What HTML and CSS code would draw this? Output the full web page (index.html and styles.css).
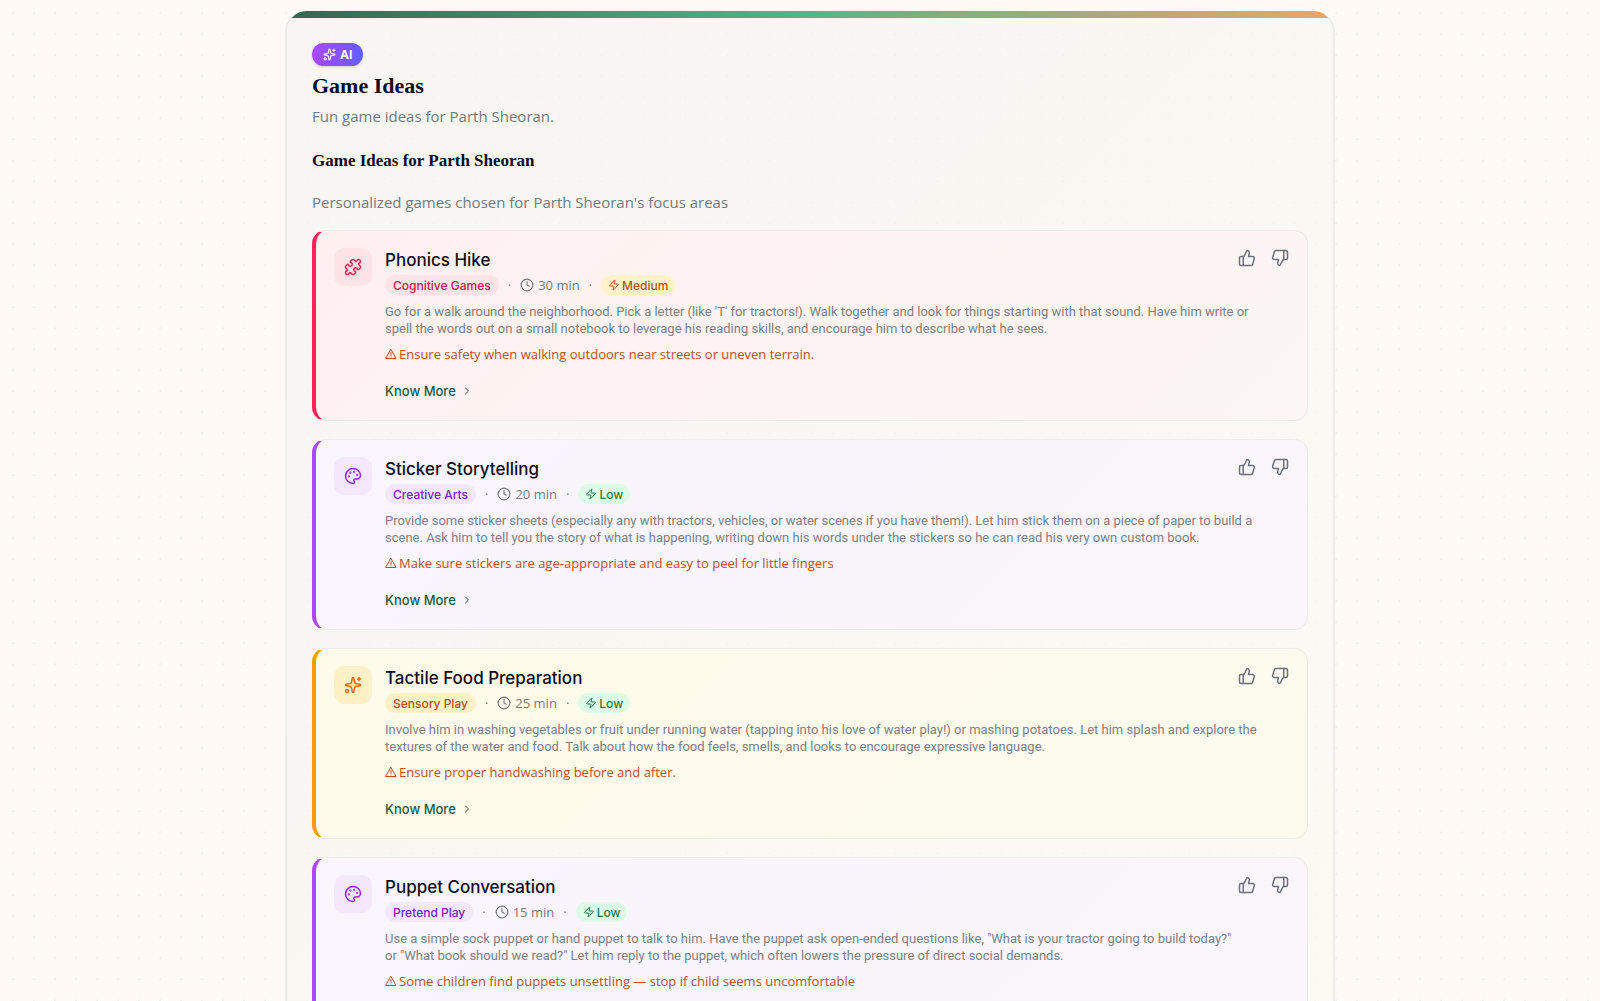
FILE: index.html
```html
<!DOCTYPE html>
<html lang="en">
<head>
    <meta charset="UTF-8">
    <meta name="viewport" content="width=device-width, initial-scale=1.0">
    <title>Game Ideas</title>
    <link rel="stylesheet" href="styles.css">
</head>
<body>
    <svg class="sprite" aria-hidden="true">
        <symbol id="i-sparkles" viewBox="0 0 24 24">
            <path d="M11.017 2.814a1 1 0 0 1 1.966 0l1.051 5.558a2 2 0 0 0 1.594 1.594l5.558 1.051a1 1 0 0 1 0 1.966l-5.558 1.051a2 2 0 0 0-1.594 1.594l-1.051 5.558a1 1 0 0 1-1.966 0l-1.051-5.558a2 2 0 0 0-1.594-1.594l-5.558-1.051a1 1 0 0 1 0-1.966l5.558-1.051a2 2 0 0 0 1.594-1.594z"/>
            <path d="M20 2v4"/><path d="M22 4h-4"/><circle cx="4" cy="20" r="2"/>
        </symbol>
        <symbol id="i-puzzle" viewBox="0 0 24 24">
            <path d="M15.39 4.39a1 1 0 0 0 1.68-.474 2.5 2.5 0 1 1 3.014 3.015 1 1 0 0 0-.474 1.68l1.683 1.682a2.414 2.414 0 0 1 0 3.414L19.61 15.39a1 1 0 0 1-1.68-.474 2.5 2.5 0 1 0-3.014 3.015 1 1 0 0 1 .474 1.68l-1.683 1.682a2.414 2.414 0 0 1-3.414 0L8.61 19.61a1 1 0 0 0-1.68.474 2.5 2.5 0 1 1-3.014-3.015 1 1 0 0 0 .474-1.68l-1.683-1.682a2.414 2.414 0 0 1 0-3.414L4.39 8.61a1 1 0 0 1 1.68.474 2.5 2.5 0 1 0 3.014-3.015 1 1 0 0 1-.474-1.68l1.683-1.682a2.414 2.414 0 0 1 3.414 0z"/>
        </symbol>
        <symbol id="i-palette" viewBox="0 0 24 24">
            <path d="M12 22a1 1 0 0 1 0-20 10 9 0 0 1 10 9 5 5 0 0 1-5 5h-2.25a1.75 1.75 0 0 0-1.4 2.8l.3.4a1.75 1.75 0 0 1-1.4 2.8z"/>
            <circle cx="13.5" cy="6.5" r=".5"/><circle cx="17.5" cy="10.5" r=".5"/><circle cx="6.5" cy="12.5" r=".5"/><circle cx="8.5" cy="7.5" r=".5"/>
        </symbol>
        <symbol id="i-clock" viewBox="0 0 24 24">
            <circle cx="12" cy="12" r="10"/><path d="M12 6v6l4 2"/>
        </symbol>
        <symbol id="i-zap" viewBox="0 0 24 24">
            <path d="M4 14a1 1 0 0 1-.78-1.63l9.9-10.2a.5.5 0 0 1 .86.46l-1.92 6.02A1 1 0 0 0 13 10h7a1 1 0 0 1 .78 1.63l-9.9 10.2a.5.5 0 0 1-.86-.46l1.92-6.02A1 1 0 0 0 11 14z"/>
        </symbol>
        <symbol id="i-warning" viewBox="0 0 24 24">
            <path d="M12 3L22 21H2z"/><path d="M12 9v6"/><path d="M12 18h.01"/>
        </symbol>
        <symbol id="i-chevron" viewBox="0 0 24 24">
            <path d="m9 18 6-6-6-6"/>
        </symbol>
        <symbol id="i-up" viewBox="0 0 24 24">
            <path d="M7 10v12"/><path d="M15 5.88 14 10h5.83a2 2 0 0 1 1.92 2.56l-2.33 8A2 2 0 0 1 17.5 22H4a2 2 0 0 1-2-2v-8a2 2 0 0 1 2-2h2.76a2 2 0 0 0 1.79-1.11L12 2a3.13 3.13 0 0 1 3 3.88Z"/>
        </symbol>
        <symbol id="i-down" viewBox="0 0 24 24">
            <path d="M17 14V2"/><path d="M9 18.12 10 14H4.17a2 2 0 0 1-1.92-2.56l2.33-8A2 2 0 0 1 6.5 2H20a2 2 0 0 1 2 2v8a2 2 0 0 1-2 2h-2.76a2 2 0 0 0-1.79 1.11L12 22a3.13 3.13 0 0 1-3-3.88Z"/>
        </symbol>
    </svg>

    <main class="panel">
        <div class="panel-bar"></div>
        <div class="panel-body">
            <header>
                <span class="ai-badge"><svg><use href="#i-sparkles"/></svg>AI</span>
                <h1>Game Ideas</h1>
                <p class="subtitle">Fun game ideas for Parth Sheoran.</p>
            </header>
            <h2>Game Ideas for Parth Sheoran</h2>
            <p class="subtitle">Personalized games chosen for Parth Sheoran's focus areas</p>

            <div class="games">
                <article class="game rose">
                    <div class="game-icon"><svg><use href="#i-puzzle"/></svg></div>
                    <div class="game-main">
                        <div class="game-head">
                            <h3>Phonics Hike</h3>
                            <div class="votes">
                                <button aria-label="Like"><svg><use href="#i-up"/></svg></button>
                                <button aria-label="Dislike"><svg><use href="#i-down"/></svg></button>
                            </div>
                        </div>
                        <div class="meta">
                            <span class="pill">Cognitive Games</span>
                            <span class="sep">·</span>
                            <span class="time"><svg><use href="#i-clock"/></svg>30 min</span>
                            <span class="sep">·</span>
                            <span class="energy medium"><svg><use href="#i-zap"/></svg>Medium</span>
                        </div>
                        <p class="desc">Go for a walk around the neighborhood. Pick a letter (like 'T' for tractors!). Walk together and look for things starting with that sound. Have him write or<br>spell the words out on a small notebook to leverage his reading skills, and encourage him to describe what he sees.</p>
                        <p class="warning"><svg><use href="#i-warning"/></svg>Ensure safety when walking outdoors near streets or uneven terrain.</p>
                        <button class="more">Know More <svg><use href="#i-chevron"/></svg></button>
                    </div>
                </article>

                <article class="game purple">
                    <div class="game-icon"><svg><use href="#i-palette"/></svg></div>
                    <div class="game-main">
                        <div class="game-head">
                            <h3>Sticker Storytelling</h3>
                            <div class="votes">
                                <button aria-label="Like"><svg><use href="#i-up"/></svg></button>
                                <button aria-label="Dislike"><svg><use href="#i-down"/></svg></button>
                            </div>
                        </div>
                        <div class="meta">
                            <span class="pill">Creative Arts</span>
                            <span class="sep">·</span>
                            <span class="time"><svg><use href="#i-clock"/></svg>20 min</span>
                            <span class="sep">·</span>
                            <span class="energy low"><svg><use href="#i-zap"/></svg>Low</span>
                        </div>
                        <p class="desc">Provide some sticker sheets (especially any with tractors, vehicles, or water scenes if you have them!). Let him stick them on a piece of paper to build a<br>scene. Ask him to tell you the story of what is happening, writing down his words under the stickers so he can read his very own custom book.</p>
                        <p class="warning"><svg><use href="#i-warning"/></svg>Make sure stickers are age-appropriate and easy to peel for little fingers</p>
                        <button class="more">Know More <svg><use href="#i-chevron"/></svg></button>
                    </div>
                </article>

                <article class="game amber">
                    <div class="game-icon"><svg><use href="#i-sparkles"/></svg></div>
                    <div class="game-main">
                        <div class="game-head">
                            <h3>Tactile Food Preparation</h3>
                            <div class="votes">
                                <button aria-label="Like"><svg><use href="#i-up"/></svg></button>
                                <button aria-label="Dislike"><svg><use href="#i-down"/></svg></button>
                            </div>
                        </div>
                        <div class="meta">
                            <span class="pill">Sensory Play</span>
                            <span class="sep">·</span>
                            <span class="time"><svg><use href="#i-clock"/></svg>25 min</span>
                            <span class="sep">·</span>
                            <span class="energy low"><svg><use href="#i-zap"/></svg>Low</span>
                        </div>
                        <p class="desc">Involve him in washing vegetables or fruit under running water (tapping into his love of water play!) or mashing potatoes. Let him splash and explore the<br>textures of the water and food. Talk about how the food feels, smells, and looks to encourage expressive language.</p>
                        <p class="warning"><svg><use href="#i-warning"/></svg>Ensure proper handwashing before and after.</p>
                        <button class="more">Know More <svg><use href="#i-chevron"/></svg></button>
                    </div>
                </article>

                <article class="game purple">
                    <div class="game-icon"><svg><use href="#i-palette"/></svg></div>
                    <div class="game-main">
                        <div class="game-head">
                            <h3>Puppet Conversation</h3>
                            <div class="votes">
                                <button aria-label="Like"><svg><use href="#i-up"/></svg></button>
                                <button aria-label="Dislike"><svg><use href="#i-down"/></svg></button>
                            </div>
                        </div>
                        <div class="meta">
                            <span class="pill">Pretend Play</span>
                            <span class="sep">·</span>
                            <span class="time"><svg><use href="#i-clock"/></svg>15 min</span>
                            <span class="sep">·</span>
                            <span class="energy low"><svg><use href="#i-zap"/></svg>Low</span>
                        </div>
                        <p class="desc">Use a simple sock puppet or hand puppet to talk to him. Have the puppet ask open-ended questions like, "What is your tractor going to build today?"<br>or "What book should we read?" Let him reply to the puppet, which often lowers the pressure of direct social demands.</p>
                        <p class="warning"><svg><use href="#i-warning"/></svg>Some children find puppets unsettling — stop if child seems uncomfortable</p>
                        <button class="more">Know More <svg><use href="#i-chevron"/></svg></button>
                    </div>
                </article>
            </div>
        </div>
    </main>
</body>
</html>
```
FILE: styles.css
```css
* {
    box-sizing: border-box;
}
body {
    margin: 0;
    padding: 11px 0 24px 20px;
    background-color: #fffaf6;
    background-image: radial-gradient(circle, #f3f0ec 1px, transparent 1px);
    background-size: 21px 21px;
    background-position: 3px 3px;
    color: #0b0b1e;
    font-family: "Open Sans", sans-serif;
}
h1, h2, h3, p {
    margin: 0;
}
svg {
    fill: none;
    stroke: currentColor;
    stroke-width: 2;
    stroke-linecap: round;
    stroke-linejoin: round;
    flex-shrink: 0;
}
button {
    padding: 0;
    border: none;
    background: none;
    color: inherit;
    font-family: inherit;
    cursor: pointer;
}
.sprite {
    display: none;
}

/* panel */
.panel {
    max-width: 1050px;
    margin: 0 auto;
    border: 2px solid #e9ece9;
    border-top: none;
    border-radius: 21px;
    overflow: hidden;
    background: linear-gradient(135deg, rgba(242, 243, 240, 0.6), rgba(249, 250, 241, 0.6));
}
.panel-bar {
    height: 7px;
    background: linear-gradient(90deg, #2d6a4f, #52b788 50%, #f4a261);
}
.panel-body {
    padding: 25px;
}
.ai-badge {
    display: flex;
    align-items: center;
    gap: 4px;
    width: fit-content;
    height: 23px;
    padding: 0 11px;
    border-radius: 12px;
    background: linear-gradient(90deg, #ad46ff, #615fff);
    box-shadow: 0 1px 3px rgba(0, 0, 0, 0.15);
    color: white;
    font: 700 12px Inter, sans-serif;
}
.ai-badge svg {
    width: 13px;
    height: 13px;
}
h1 {
    margin-top: 5px;
    font: 700 22px/30px "Liberation Serif", serif;
}
h2 {
    margin: 21px 0 17px;
    font: 700 17px/24px "Liberation Serif", serif;
}
.subtitle {
    font-size: 15px;
    line-height: 24px;
    color: #727a80;
}
header .subtitle {
    margin-top: 3px;
}

/* game cards */
.games {
    display: flex;
    flex-direction: column;
    gap: 18px;
    margin-top: 16px;
}
.game {
    display: flex;
    gap: 13px;
    padding: 17px 18px 20px;
    border: 1px solid #ecebea;
    border-left: 4px solid;
    border-radius: 14px;
}
.game-icon {
    display: flex;
    align-items: center;
    justify-content: center;
    flex-shrink: 0;
    width: 38px;
    height: 38px;
    border-radius: 10px;
}
.game-icon svg {
    width: 18px;
    height: 18px;
}
.game-main {
    flex: 1;
    min-width: 0;
}
.game-head {
    display: flex;
    justify-content: space-between;
}
h3 {
    font: 500 17px/25px Inter, sans-serif;
}
.votes {
    display: flex;
    gap: 15px;
    height: 20px;
    color: #6a7080;
}
.votes svg {
    display: block;
    width: 18px;
    height: 18px;
}
.meta {
    display: flex;
    align-items: center;
    gap: 9px;
    height: 20px;
    margin-top: 2px;
}
.pill, .energy {
    display: flex;
    align-items: center;
    gap: 2px;
    height: 20px;
    padding: 0 8px;
    border-radius: 10px;
    font: 500 12px Inter, sans-serif;
}
.energy {
    padding: 0 7px;
}
.energy svg {
    width: 12px;
    height: 12px;
}
.time {
    display: flex;
    align-items: center;
    gap: 4px;
    font-size: 13px;
    color: #727a80;
}
.time svg {
    width: 14px;
    height: 14px;
}
.sep {
    font-size: 13px;
    color: #727a80;
}
.desc {
    margin-top: 8px;
    font: 400 13px/17px Roboto, sans-serif;
    color: #7a8188;
}
.warning {
    display: flex;
    align-items: center;
    gap: 2px;
    margin-top: 8px;
    font-size: 13px;
    line-height: 18px;
    color: #bb5025;
}
.warning svg {
    width: 12px;
    height: 12px;
}
.more {
    display: flex;
    align-items: center;
    gap: 5px;
    margin-top: 19px;
    font: 500 13px/18px Inter, sans-serif;
    color: #235a43;
}
.more svg {
    width: 12px;
    height: 12px;
}

/* card colours */
.rose {
    border-left-color: #ff2056;
    background: linear-gradient(135deg, #fff0f0, #fcf7f4);
}
.rose .game-icon, .rose .pill {
    background: #ffe4e7;
    color: #c9184a;
}
.rose .game-icon {
    color: #ee1c50;
}
.purple {
    border-left-color: #ad46ff;
    background: linear-gradient(135deg, #faf5ff, #faf6f9);
}
.purple .game-icon, .purple .pill {
    background: #f3e8ff;
    color: #7a22ce;
}
.purple .game-icon {
    color: #9a20f5;
}
.amber {
    border-left-color: #ff9a00;
    background: linear-gradient(135deg, #fffbea, #fcfbee);
}
.amber .game-icon, .amber .pill {
    background: #fef1c6;
    color: #b9501c;
}
.amber .game-icon {
    color: #e66a10;
}
.medium {
    background: #fef3c6;
    color: #b9501c;
}
.low {
    background: #dcfce7;
    color: #177a4a;
}
```
